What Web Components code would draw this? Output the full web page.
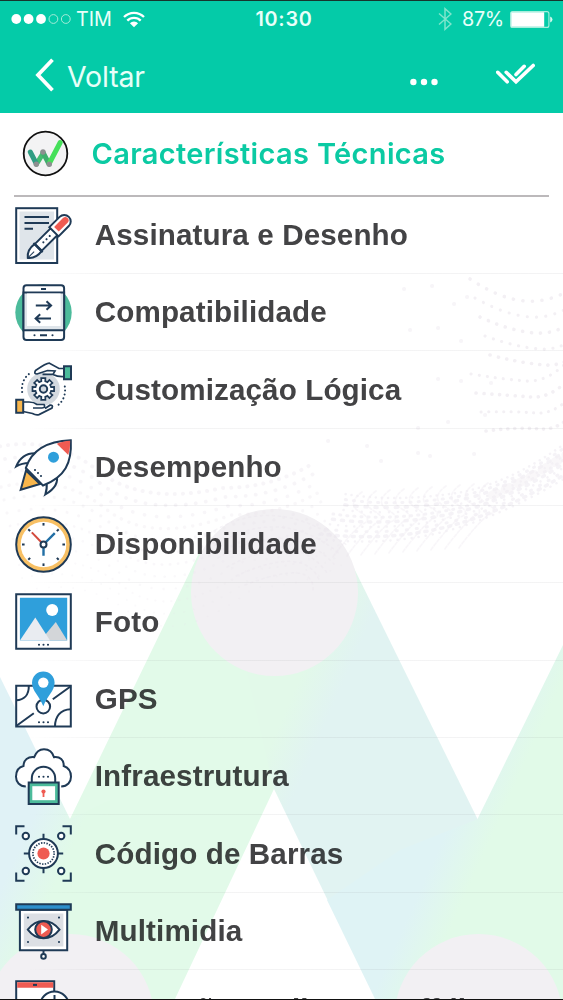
<!DOCTYPE html>
<html lang="pt-BR">
<head>
<meta charset="utf-8">
<meta name="viewport" content="width=device-width, initial-scale=1">
<title>Características Técnicas</title>
<style>
    html, body { margin: 0; padding: 0; }
    body { background: #fff; overflow: hidden; }
    tech-row:last-of-type { --label-drop: 4px; }
</style>
</head>
<body>
<tech-screen>
    <status-bar slot="top" carrier="TIM" time="10:30" battery="87%"></status-bar>
    <nav-bar slot="top">Voltar</nav-bar>
    <section-title>Características Técnicas</section-title>
    <tech-row icon="signature">Assinatura e Desenho</tech-row>
    <tech-row icon="tablet">Compatibilidade</tech-row>
    <tech-row icon="gear">Customização Lógica</tech-row>
    <tech-row icon="rocket">Desempenho</tech-row>
    <tech-row icon="clock">Disponibilidade</tech-row>
    <tech-row icon="photo">Foto</tech-row>
    <tech-row icon="map">GPS</tech-row>
    <tech-row icon="cloud">Infraestrutura</tech-row>
    <tech-row icon="scan">Código de Barras</tech-row>
    <tech-row icon="media">Multimidia</tech-row>
    <tech-row icon="online">Operação On-line ou Off-line</tech-row>
</tech-screen>

<script>
/** Builds the teeth of the gear icon, one every 45 degrees */
function gearPath(cx, cy){
    var d = '';
    for(var i = 0; i < 8; i++){
        [[-25, 8], [-14, 8], [-11, 11], [11, 11], [14, 8], [25, 8]].forEach(function (p){
            var a = (i * 45 + p[0]) * Math.PI / 180;
            if(Math.abs(p[0]) === 25) a = (i * 45 + Math.sign(p[0]) * 22) * Math.PI / 180;
            d += (d ? 'L' : 'M') + (cx + p[1] * Math.cos(a)).toFixed(2) + ' ' + (cy + p[1] * Math.sin(a)).toFixed(2);
        });
    }
    return d + 'Z';
}

/** Minute marks of the clock icon */
function clockTicks(){
    var out = '';
    for(var a = 0; a < 360; a += 45){
        out += `<path d="M28.5 7v2.6" transform="rotate(${a} 28.5 28.5)"/>`;
    }
    return out;
}

/** Three small dots centered on x = 28.5 */
function dots(y){
    return `<path class="dot" d="M24 ${y}h.01M28.5 ${y}h.01M33 ${y}h.01"/>`;
}

/** All icons are drawn on a 57x57 canvas, with a navy outline by default */
var icons = {
    signature: `<rect x="1.2" y="1.2" width="41" height="54.8" fill="#fff"/>
        <path class="n" fill="#dfe5ea" d="M4.5 4.5h34.5v48h-34.5z"/>
        <path d="M9.5 10h24.5M9.5 16h24.5M9.5 21.8h8.5"/>
        <g transform="translate(12.8 50.9) rotate(-45)">
            <path fill="#fff" d="M0 0C4-5 8-6 14.5-5V5C8 6 4 5 0 0z"/><path stroke-width="1" d="M0 0H9"/>
            <path fill="#fff" d="M15-4.8H37V4.8H15zM37-6.5H51.5a6.5 6.5 0 0 1 0 13H37z"/>
            <path d="M14.5-6.5V6.5"/>
            <path class="n" fill="#ef5b52" d="M40.5-3.3H53a3.3 3.3 0 0 1 0 6.6H40.5z"/>
            <path class="dot" d="M22 0h.01M26.5 0h.01M31 0h.01"/>
        </g>`,
    tablet: `<circle class="n" cx="28.5" cy="28.5" r="28.2" fill="#4cbb9b"/>
        <rect x="8.5" y="1.2" width="40.6" height="54.8" rx="3" fill="#fff"/>
        <path fill="#dfe5ea" d="M8.5 8.6h40.6v37.7H8.5z"/><path class="n" fill="#fff" d="M12 9.6h33.6v32.4h-33.6z"/>
        <path d="M20.8 21.5h15M31.5 17.2l4.6 4.3-4.6 4.3M36 34.5H20.8M25.2 30.2l-4.6 4.3 4.6 4.3M26 5h5M25 51.3h7"/>
        <path class="dot" d="M19.5 51.3h.01M37.5 51.3h.01"/>`,
    gear: `<circle class="n" cx="28.5" cy="28" r="16.3" fill="#d3d9df"/>
        <path fill="#fff" stroke-width="1.7" d="${gearPath(28.3, 28)}"/><circle cx="28.5" cy="28" r="3.7" fill="#d3d9df"/>
        <path stroke-dasharray=".1 3.9" stroke-linecap="round" d="M7.2 31C6 23 9 16 16 11.5M49.8 25.5C51 33 48.5 41 41 45.5"/>
        <path stroke-width="1.7" fill="#fff" d="M49 7.5H44L34.5 2.2Q32 1.7 20.5 9.5 18.5 13 22 13L32.5 9.5 40 10 38 13.4H27.5M38 13.4Q43 16 49 15.5"/>
        <path fill="#4cbb9b" d="M49 5.3h7v13h-7z"/>
        <path stroke-width="1.7" fill="#fff" d="M8 41H14Q19 41 22 43.5H29Q31 46.5 27 47H18M30 47.5L35 44.2Q38.5 44 37 47L24 53.6Q21 54.5 17.5 52.5L8 50.5"/>
        <path fill="#f8b64c" d="M1.2 38.7h7v13h-7z"/>`,
    rocket: `<path fill="#fff" d="M20.5 14.2C12 14 5 18 1.2 27.4 6 24.6 10 24 14 24M41.5 35.5C44 44 38 51 30.3 55.5 32 51 32 47 31.5 43"/>
        <path fill="#f8b64c" d="M11 31.5L5.7 50.8 25 45z"/>
        <path fill="#fff" d="M55.8 1.2C57 24 50 38 28 46.5L10.8 29C17 10 34 2 55.8 1.2z"/>
        <path class="n" fill="#ef5b52" d="M55.2 1.8C50 2 46 3 41.8 4.8L53.3 15.9Q55.4 10 55.2 1.8z"/>
        <circle class="n" cx="38.5" cy="18.2" r="5.5" fill="#2f9fdb"/>
        <path class="dot" d="M20 31h.01M23 34h.01M26 37h.01"/>`,
    clock: `<circle cx="28.5" cy="28.5" r="27.3" fill="#f8c064"/><circle class="n" cx="28.5" cy="28.5" r="22.8" fill="#fff"/>
        ${clockTicks()}
        <path style="stroke:#d34a3c" d="M28.5 28.5L16.8 16.4"/><path style="stroke:#226fa5" stroke-width="2.4" d="M28.5 28.5L39.8 17.2M28.5 28.5V39.8"/>
        <circle cx="28.5" cy="28.5" r="3" fill="#fff"/>`,
    photo: `<path fill="#fff" d="M1.2 1.2h54.6v54.6H1.2z"/><path class="n" fill="#2f9fdb" d="M4.9 4.8h47.3v42.8H4.9z"/>
        <circle class="n" cx="37.2" cy="17" r="6" fill="#fff"/>
        <path class="n" fill="#d3d6d9" d="M30 42l10.8-13 11.4 18.6H28z"/>
        <path class="n" fill="#e9ecf1" d="M4.9 47.6L20.3 24.4 35 47.6z"/>${dots(51.8)}`,
    map: `<path fill="#fff" d="M1.2 14.8h54.6v40.8H1.2z"/>
        <path d="M13.8 14.8C14 24 9 29 1.2 29.3M40 55.6C40 46 45 38.5 55.8 38.3M1.2 55L18.8 42.3M37.8 28.3L55.8 15.2"/>
        <circle cx="28.3" cy="35.6" r="6.8"/>
        <path class="n" fill="#2f9fdb" d="M28.3.4A11.3 11.3 0 0 1 39.6 11.7C39.6 20 32 25 28.3 35.2 24.6 25 17 20 17 11.7A11.3 11.3 0 0 1 28.3.4z"/>
        <circle class="n" cx="28.3" cy="11.6" r="5.2" fill="#fff"/>${dots(51.2)}`,
    cloud: `<path fill="#fff" d="M10.8 38.6C4.5 38.2 1 34 1 28.8 1 23 4 19 8.5 18 8.6 12 13 8.5 19.2 9.2 21 4 24 1.2 29 1.2S37.5 4 39 9.2C45 8.5 49 12 48.7 18 53 19.5 56 23 56 28.8 56 34 52.5 38.2 46.2 38.6"/>
        <path d="M16.8 34.5V30.4a11.7 11.7 0 0 1 23.4 0V34.5"/>
        <path fill="#4cbb9b" d="M13.7 34.6h30v21.3h-30z"/><path class="n" fill="#fff" d="M17.3 38.2h22.8v14H17.3z"/>
        <circle class="n" cx="28.5" cy="43.5" r="2.1" fill="#ef5b52"/><path class="n" fill="#ef5b52" d="M27.6 43h1.8v6h-1.8z"/>${dots(28.8)}`,
    scan: `<path d="M1.2 9.5V1.2H9.5M47.5 1.2H55.8V9.5M1.2 47.5V55.8H9.5M47.5 55.8H55.8V47.5M28.5 8.8V15M28.5 42V48.2M8.8 28.5H15M42 28.5H48.2"/>
        <g fill="#fff"><circle cx="10.8" cy="11" r="3.2"/><circle cx="46.2" cy="11" r="3.2"/><circle cx="10.8" cy="46" r="3.2"/><circle cx="46.2" cy="46" r="3.2"/>
        <circle cx="28.5" cy="28.5" r="14.4"/></g>
        <circle cx="28.5" cy="28.5" r="10.6" stroke-dasharray="1.4 1.37" stroke-width="1.7"/><circle class="n" cx="28.5" cy="28.5" r="6.1" fill="#ef5b52"/>`,
    media: `<path fill="#fff" d="M4.9 6.7h47.3v40.6H4.9z"/><path class="n" fill="#dcdfe4" d="M8.8 10.5h39.6v33H8.8z"/>
        <path fill="#2d8fcb" d="M1.2 1.2h54.6v5.6H1.2z"/>
        <path fill="#fff" d="M12.8 26.6C21.5 15 35.5 15 44.5 26.6 35.5 38.2 21.5 38.2 12.8 26.6z"/>
        <circle cx="28.5" cy="26.6" r="8.3" fill="#ef5b52"/><path class="n" fill="#fff" d="M26.2 21.8v9.6l6.8-4.8z"/>
        <path class="dot" d="M13 14.6h.01M44 14.6h.01M13 39h.01M44 39h.01"/>
        <path d="M28.5 47.3V51"/><circle cx="28.5" cy="53.4" r="2.3" fill="#fff"/>`,
    online: `<path fill="#fff" d="M1.2 1.2h38v54H1.2z"/><path class="n" fill="#ef5b52" d="M2.2 2.2h36v5.5h-36z"/><path d="M18 4.9h4"/>
        <circle cx="39.5" cy="26" r="14.5" fill="#fff"/><path d="M39.5 15v4"/>`
};

/** One of the line icons above, picked with the `name` attribute */
customElements.define('tech-icon', class extends HTMLElement {
    connectedCallback(){
        const shadow = this.attachShadow({mode: 'open'});
        shadow.innerHTML = `<style>
        :host { display: block; width: 57px; height: 57px; flex: none; }
        svg { display: block; overflow: visible; fill: none; stroke: #1f3a56; stroke-width: 2; }
        .n { stroke: none; }
        .dot { stroke-width: 2.1; stroke-linecap: round; }
    </style>
    <svg width="57" height="57" viewBox="0 0 57 57">${icons[this.getAttribute('name')] || ''}</svg>`;
    }
});

/** Phone status bar: signal, carrier, clock and battery */
customElements.define('status-bar', class extends HTMLElement {
    connectedCallback(){
        const shadow = this.attachShadow({mode: 'open'});
        shadow.innerHTML = `<style>
        :host {
            display: grid;
            grid-template-columns: 1fr auto 1fr;
            align-items: center;
            height: 38px;
            padding: 0 10px 1px 11px;
            box-sizing: border-box;
            border-top: 1px solid #17352d;
            font: 400 19.8px Inter, sans-serif;
            color: #e9fff9;
        }
        div { display: flex; align-items: center; }
        svg { display: block; flex: none; }
        .carrier { margin: 0 11px 0 5px; }
        .time { margin-left: 4px; font-weight: 600; letter-spacing: .75px; }
        .right { justify-content: flex-end; }
        .level { margin: 0 6px 0 10px; letter-spacing: -.3px; }
    </style>
    <div>
        <svg width="60" height="12" viewBox="0 0 60 12" fill="#fff">
            <circle cx="5.3" cy="6" r="4.9"/><circle cx="17.6" cy="6" r="4.9"/><circle cx="30" cy="6" r="4.9"/>
            <g fill="none" stroke="#a5ecd9" stroke-width="1"><circle cx="42.4" cy="6" r="4.4"/><circle cx="54.8" cy="6" r="4.4"/></g>
        </svg>
        <span class="carrier">${this.getAttribute('carrier')}</span>
        <svg width="22" height="17" viewBox="0 0 22 17" fill="none" stroke="#fff" stroke-width="2.3">
            <path d="M1 6a14 14 0 0 1 20 0M4.3 9.6a9.4 9.4 0 0 1 13.4 0"/><path fill="#fff" stroke="none" d="M11 16.3L6.9 12.2a5.8 5.8 0 0 1 8.2 0z"/>
        </svg>
    </div>
    <span class="time">${this.getAttribute('time')}</span>
    <div class="right">
        <svg width="14" height="24" viewBox="0 0 14 24" fill="none" stroke="#7fe5cc" stroke-width="1.5"><path d="M1 6.5L13 17 7 22.3V1.7L13 7 1 17.5"/></svg>
        <span class="level">${this.getAttribute('battery')}</span>
        <svg width="43" height="17" viewBox="0 0 43 17"><rect x=".6" y=".6" width="38.3" height="15.8" rx="2" fill="none" stroke="#a8eedc" stroke-width="1.1"/>
            <path fill="#fff" d="M1.2 1.2h33v14.6h-33z"/><path fill="#d4f8ee" d="M40.2 5.6q2.3.8 2.3 2.9t-2.3 2.9z"/></svg>
    </div>`;
    }
});

/** Navigation bar: the back label comes in through the slot */
customElements.define('nav-bar', class extends HTMLElement {
    connectedCallback(){
        const shadow = this.attachShadow({mode: 'open'});
        shadow.innerHTML = `<style>
        :host {
            display: flex;
            align-items: center;
            height: 75px;
            padding: 0 27px 0 35px;
            box-sizing: border-box;
            font: 400 28.5px Inter, sans-serif;
            letter-spacing: -.15px;
            color: #e6fff8;
        }
        .back { margin-right: 13px; margin-top: -2px; }
        .label { flex: 1; margin-top: 2px; }
        .more { margin: 13px 58px 0 0; }
        .done { margin-top: -3px; }
        svg { display: block; flex: none; }
    </style>
    <svg class="back" width="19" height="34" viewBox="0 0 19 34" fill="none" stroke="#fff" stroke-width="3.8"><path d="M17.5 1.8L3 17 17.5 32.2"/></svg>
    <span class="label"><slot></slot></span>
    <svg class="more" width="28" height="8" viewBox="0 0 28 8" fill="#fff"><circle cx="3.4" cy="4" r="3.2"/><circle cx="14" cy="4" r="3.2"/><circle cx="24.5" cy="4" r="3.2"/></svg>
    <svg class="done" width="40" height="23" viewBox="0 0 40 23" fill="none" stroke="#fff" stroke-width="3.6" stroke-linecap="round">
        <path d="M1.7 9.3L11.2 18.8M10.2 9.3L20 18.8 37.2 2.5M20 11.5L28.2 3.3"/>
    </svg>`;
    }
});

/** Section heading with the round W mark and a rule under it */
customElements.define('section-title', class extends HTMLElement {
    connectedCallback(){
        const shadow = this.attachShadow({mode: 'open'});
        shadow.innerHTML = `<style>
        :host {
            display: flex;
            align-items: center;
            height: 83.5px;
            margin: 0 14px;
            padding: 0 0 0 8px;
            box-sizing: border-box;
            border-bottom: 2px solid #bcb9bb;
            font: 600 29px Inter, sans-serif;
            color: #0bcaa3;
        }
        svg { display: block; flex: none; margin-right: 22.5px; }
        .label { white-space: nowrap; letter-spacing: .33px; }
    </style>
    <svg width="47" height="47" viewBox="0 0 47 47" fill="none" stroke-width="5" stroke-linecap="round">
        <circle cx="23.5" cy="23.5" r="21.8" fill="#f3f3f4" stroke="#111" stroke-width="1.8"/>
        <path stroke="#45bd71" d="M21 23.5L14.5 34"/><path stroke="#2f9d83" d="M8.3 22L14 33"/>
        <path stroke="#3fae6e" d="M21 22.5L27 34"/><path stroke="#45e05a" d="M38.2 12.5L27.5 33"/>
        <g fill="#8d8f90" stroke="none"><circle cx="14.3" cy="34.3" r="2.7"/><circle cx="21" cy="22" r="2.7"/><circle cx="27.3" cy="34.3" r="2.7"/></g>
    </svg>
    <span class="label"><slot></slot></span>`;
    }
});

/** One feature of the list: `icon` names the drawing, the slot is its label */
customElements.define('tech-row', class extends HTMLElement {
    connectedCallback(){
        const shadow = this.attachShadow({mode: 'open'});
        shadow.innerHTML = `<style>
        :host {
            display: flex;
            align-items: center;
            height: 77.35px;
            padding: 0 0 .3px 15.1px;
            box-sizing: border-box;
            background: linear-gradient(90deg, transparent 28px, rgba(90, 90, 100, .07) 110px) bottom / 100% 1px no-repeat;
        }
        .label {
            margin-left: 22.7px;
            padding-top: var(--label-drop, 0);
            font: bold 29.6px/36px "Liberation Sans", Arial, sans-serif;
            letter-spacing: .12px;
            color: #434345;
            white-space: nowrap;
            mix-blend-mode: multiply;
        }
    </style>
    <tech-icon name="${this.getAttribute('icon')}"></tech-icon>
    <span class="label"><slot></slot></span>`;
    }
});

/** Pale artwork behind the list: dotted waves and the large W zigzag */
customElements.define('wave-backdrop', class extends HTMLElement {
    /** Dotted wave lines, each a polyline drawn with round dashes */
    waves(){
        var out = '';
        // loose contour lines at the upper right, steeper towards the top
        for(var i = 0; i < 9; i++){
            var y = 279 + i * 19;
            var x = 470 + (i * 5) % 24;
            out += `<path d="M${x} ${y}q30 ${20 - i * 3} 55 ${22 - i * 3}t50 ${-14 - i * 3}" stroke-width="${3.6 - i % 2 * .5}" stroke-dasharray=".1 ${9.5 - i * .3}"/>`;
        }
        // dense band falling from the right edge to the circle
        for(i = 0; i < 10; i++){
            out += `<path d="M575 ${436 + i * 4}Q510 ${486 + i * 3} 450 ${494 + i * 4}T${345 - i * 3} ${494 + i * 5}" stroke-width="${2.5 + i % 3 * .5}" stroke-dasharray="${.1 + i % 3} ${6 + i % 4}" opacity=".8"/>`;
        }
        out += '<path d="M570 452Q530 480 488 497" stroke-width="9" stroke-dasharray="5 9" opacity=".5"/>';
        // small crests hanging from the band
        for(i = 0; i < 10; i++){
            out += `<path d="M${362 + i * 14} ${492 - i}q-16 12 -2 20t2 12q-12 10 -30 34" stroke-width="1.8" stroke-dasharray="3 2" opacity=".55"/>`;
        }
        // faint rows across the left half
        for(i = 0; i < 12; i++){
            out += `<path d="M${-8 + i * 3} ${448 + i * 13}q60 -14 105 22t125 ${18 - i * 4}q50 0 90 -24" stroke-width="${4 - i * .2}" stroke-dasharray=".1 ${8 + i % 3 * 2}" opacity="${.65 - i * .03}"/>`;
        }
        // contour lines over the big circle
        for(i = 0; i < 6; i++){
            out += `<path d="M${200 + i * 9} ${540 + i * 9}q70 -${52 - i * 5} ${148 - i * 16} 6" stroke-width="1.5" stroke-dasharray="2 4" opacity=".7"/>`;
        }
        // single stray specks
        out += '<path d="M404 289h.1M432 286h.1M410 330h.1M438 328h.1M461 341h.1M454 304h.1M467 297h.1M438 379h.1M461 381h.1M491 383h.1M448 422h.1M418 428h.1M328 441h.1M367 446h.1M381 461h.1M474 454h.1M430 456h.1M418 453h.1M485 415h.1" stroke-width="4" opacity=".7"/>';
        return out;
    }

    connectedCallback(){
        const shadow = this.attachShadow({mode: 'open'});
        shadow.innerHTML = `<style>
        :host { display: block; }
        svg { display: block; }
    </style>
    <svg width="563" height="1000" viewBox="0 0 563 1000">
        <defs>
            <linearGradient id="arm" gradientUnits="userSpaceOnUse" x1="290" y1="700" x2="345" y2="724">
                <stop offset="0" stop-color="#e2f9e9"/><stop offset=".7" stop-color="#e1f3f2"/>
            </linearGradient>
            <linearGradient id="side" gradientUnits="userSpaceOnUse" x1="18" y1="850" x2="62" y2="870">
                <stop offset="0" stop-color="#e0f2f6"/><stop offset="1" stop-color="#e1fae8"/>
            </linearGradient>
            <linearGradient id="join" gradientUnits="userSpaceOnUse" x1="422" y1="885" x2="462" y2="903">
                <stop offset="0" stop-color="#dff3f5"/><stop offset="1" stop-color="#e1fae8"/>
            </linearGradient>
        </defs>
        <path fill="#e2fae9" d="M199 553L70 819V1000H174.500L274 789 346 553z"/>
        <path fill="url(#side)" d="M0 677L70 819 110 800V1000H0z"/>
        <path fill="url(#arm)" d="M230 600L349 558 477.500 819 425 900 330 905 274 789z"/>
        <path fill="url(#join)" d="M563 645L477.500 819 400 850 327 900 375.500 1000H563z"/>
        <g fill="#f2f0f3"><circle cx="274.500" cy="592.500" r="83.500"/><circle cx="70" cy="1018" r="84"/><circle cx="478.500" cy="1018" r="84"/></g>
        <g fill="none" stroke="#e9e4ec" stroke-linecap="round" opacity=".55">${this.waves()}</g>
    </svg>`;
    }
});

/** The whole phone screen: bars in the `top` slot, the list below them */
customElements.define('tech-screen', class extends HTMLElement {
    connectedCallback(){
        const shadow = this.attachShadow({mode: 'open'});
        shadow.innerHTML = `<style>
        :host {
            display: grid;
            grid-template: 999px 1px / 563px;
            height: 1000px;
            width: 563px;
            overflow: hidden;
            background: #fff;
        }
        wave-backdrop, main { grid-area: 1 / 1; min-height: 0; overflow: hidden; }
        main { overflow: visible; height: 999px; }
        header { background: #04cba8; height: 113px; }
        footer { background: #111; grid-area: 2 / 1; z-index: 1; }
    </style>
    <wave-backdrop></wave-backdrop>
    <main>
        <header><slot name="top"></slot></header>
        <slot></slot>
    </main>
    <footer></footer>`;
    }
});
</script>
</body>
</html>
